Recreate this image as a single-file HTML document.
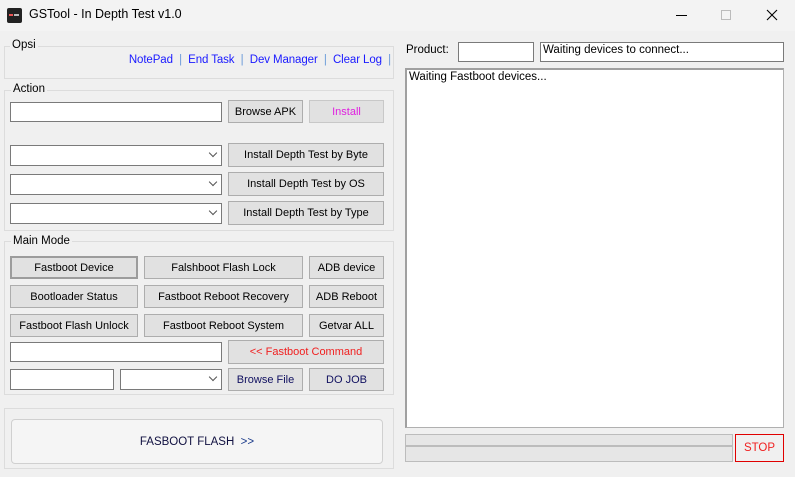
<!DOCTYPE html>
<html><head><meta charset="utf-8"><style>
*{box-sizing:border-box;margin:0;padding:0}
body{width:795px;height:477px;background:#f0f0f0;font-family:"Liberation Sans",sans-serif;font-size:11.5px;color:#000;position:relative;overflow:hidden}
.a{position:absolute}
.tb{left:0;top:0;width:795px;height:31px;background:#f3f3f3}
.grp{border:1px solid #dcdcdc}
.lbl{background:#f0f0f0;padding:0 2px;font-size:11.5px}
.btn{border:1px solid #adadad;background:#e1e1e1;display:flex;align-items:center;justify-content:center;font-size:11px;white-space:nowrap}
.tx{background:#fff;border:1px solid #7a7a7a}
.cb{background:#fff;border:1px solid #7a7a7a}
.cb:after{content:"";position:absolute;right:5px;top:4px;width:5px;height:5px;border-right:1px solid #555;border-bottom:1px solid #555;transform:rotate(45deg)}
.lk{color:#1a1aff}
.sep{color:#6a9ad8}
</style></head><body>
<div class="a tb"></div>
<div class="a" style="left:7px;top:8px;width:15px;height:15px;background:#222;border-radius:2px"><div class="a" style="left:2px;top:6px;width:4px;height:2px;background:#e55"></div><div class="a" style="left:7px;top:6px;width:5px;height:2px;background:#bbb"></div></div>
<div class="a" style="left:29px;top:7px;font-size:12.5px">GSTool - In Depth Test v1.0</div>
<div class="a" style="left:676px;top:15px;width:11px;height:1px;background:#000"></div>
<div class="a" style="left:721px;top:10px;width:10px;height:10px;border:1px solid #bbb"></div>
<svg class="a" style="left:766px;top:9px" width="12" height="12"><path d="M1 1L11 11M11 1L1 11" stroke="#000" stroke-width="1.1"/></svg>

<div class="a grp" style="left:4px;top:46px;width:390px;height:33px"></div>
<div class="a lbl" style="left:10px;top:39px">Opsi</div>
<div class="a" style="right:404px;top:54px;white-space:nowrap;font-size:11.5px;letter-spacing:-0.1px"><span class="lk">NotePad</span><span class="sep">&nbsp; | &nbsp;</span><span class="lk">End Task</span><span class="sep">&nbsp; | &nbsp;</span><span class="lk">Dev Manager</span><span class="sep">&nbsp; | &nbsp;</span><span class="lk">Clear Log</span><span class="sep">&nbsp; |</span></div>

<div class="a grp" style="left:4px;top:90px;width:390px;height:141px"></div>
<div class="a lbl" style="left:11px;top:83px">Action</div>
<div class="a tx" style="left:10px;top:102px;width:212px;height:20px"></div>
<div class="a btn" style="left:228px;top:100px;width:75px;height:23px">Browse APK</div>
<div class="a btn" style="left:309px;top:100px;width:75px;height:23px;color:#e020e0;border-color:#c8c8c8">Install</div>
<div class="a cb" style="left:10px;top:145px;width:212px;height:21px"></div>
<div class="a btn" style="left:228px;top:143px;width:156px;height:24px">Install Depth Test by Byte</div>
<div class="a cb" style="left:10px;top:174px;width:212px;height:21px"></div>
<div class="a btn" style="left:228px;top:172px;width:156px;height:24px">Install Depth Test by OS</div>
<div class="a cb" style="left:10px;top:203px;width:212px;height:21px"></div>
<div class="a btn" style="left:228px;top:201px;width:156px;height:24px">Install Depth Test by Type</div>

<div class="a grp" style="left:4px;top:241px;width:390px;height:154px"></div>
<div class="a lbl" style="left:11px;top:235px">Main Mode</div>
<div class="a btn" style="left:10px;top:256px;width:128px;height:23px;border:2px solid #9c9c9c">Fastboot Device</div>
<div class="a btn" style="left:144px;top:256px;width:159px;height:23px">Falshboot Flash Lock</div>
<div class="a btn" style="left:309px;top:256px;width:75px;height:23px">ADB device</div>
<div class="a btn" style="left:10px;top:285px;width:128px;height:23px">Bootloader Status</div>
<div class="a btn" style="left:144px;top:285px;width:159px;height:23px">Fastboot Reboot Recovery</div>
<div class="a btn" style="left:309px;top:285px;width:75px;height:23px">ADB Reboot</div>
<div class="a btn" style="left:10px;top:314px;width:128px;height:23px">Fastboot Flash Unlock</div>
<div class="a btn" style="left:144px;top:314px;width:159px;height:23px">Fastboot Reboot System</div>
<div class="a btn" style="left:309px;top:314px;width:75px;height:23px">Getvar ALL</div>
<div class="a tx" style="left:10px;top:342px;width:212px;height:20px"></div>
<div class="a btn" style="left:228px;top:340px;width:156px;height:24px;color:#f02020">&lt;&lt; Fastboot Command</div>
<div class="a tx" style="left:10px;top:369px;width:104px;height:21px"></div>
<div class="a cb" style="left:120px;top:369px;width:102px;height:21px"></div>
<div class="a btn" style="left:228px;top:368px;width:75px;height:23px;color:#101060">Browse File</div>
<div class="a btn" style="left:309px;top:368px;width:75px;height:23px;color:#101060">DO JOB</div>

<div class="a grp" style="left:4px;top:408px;width:390px;height:61px"></div>
<div class="a" style="left:11px;top:419px;width:372px;height:45px;border:1px solid #d0d0d0;border-radius:4px;background:#f5f5f5;display:flex;align-items:center;justify-content:center;color:#101040">FASBOOT FLASH &nbsp;<span style="color:#1a3a8a">&gt;&gt;</span></div>

<div class="a" style="left:406px;top:44px">Product:</div>
<div class="a tx" style="left:458px;top:42px;width:76px;height:20px"></div>
<div class="a tx" style="left:540px;top:42px;width:244px;height:20px;padding:1px 2px">Waiting devices to connect...</div>
<div class="a" style="left:405px;top:68px;width:379px;height:360px;background:#fff;border:1px solid #b0b0b0;border-top:2px solid #a0a0a0;border-left:2px solid #a0a0a0;padding:1px 2px">Waiting Fastboot devices...</div>
<div class="a" style="left:405px;top:434px;width:328px;height:12px;background:#e6e6e6;border:1px solid #bcbcbc"></div>
<div class="a" style="left:405px;top:446px;width:328px;height:16px;background:#e6e6e6;border:1px solid #bcbcbc"></div>
<div class="a btn" style="left:735px;top:434px;width:49px;height:28px;border:1px solid #e00000;color:#f02020;background:#f0f0f0;font-size:11.5px">STOP</div>
</body></html>
